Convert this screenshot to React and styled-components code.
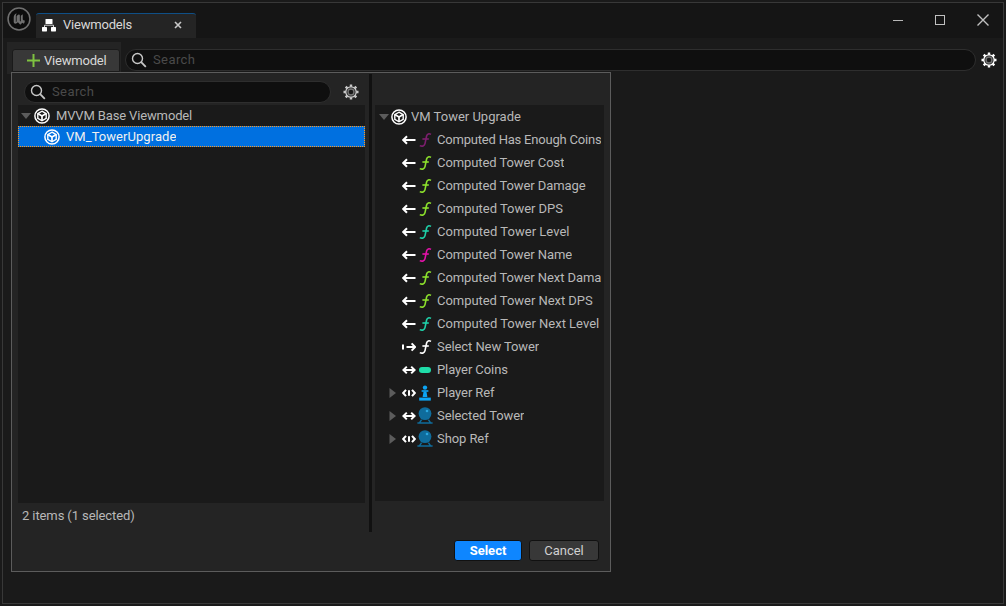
import React from 'react';
import styled, { createGlobalStyle } from 'styled-components';

const GlobalStyle = createGlobalStyle`
  html, body {
    margin: 0;
    padding: 0;
    background: #1a1a1a;
    font-family: Roboto, "Liberation Sans", sans-serif;
    font-size: 13px;
    color: #b8b8b8;
  }
`;

const Page = styled.div`
  width: 1006px;
  height: 606px;
  box-sizing: border-box;
  padding: 2px;
  overflow: hidden;
`;

const Win = styled.div`
  position: relative;
  height: 100%;
  box-sizing: border-box;
  border: 1px solid #383838;
  background: #1a1a1a;
  display: flex;
  flex-direction: column;
`;

const TitleBar = styled.div`
  height: 35px;
  flex: none;
  background: #151515;
  display: flex;
  align-items: flex-end;
  padding-left: 4px;
`;

const Logo = styled.svg`
  width: 24px;
  height: 24px;
  align-self: flex-start;
  margin-top: 4px;
  margin-right: 5px;
`;

const Tab = styled.div`
  width: 160px;
  height: 25px;
  box-sizing: border-box;
  border-top: 1px solid #0f4f86;
  border-radius: 3px 3px 0 0;
  background: #242424;
  color: #d8d8d8;
  display: flex;
  align-items: center;
  padding: 0 9px 3px 6px;
  gap: 7px;
`;

const TabTitle = styled.span`
  flex: 1;
  letter-spacing: -0.2px;
`;

const TabClose = styled.svg`
  width: 8px;
  height: 8px;
  margin-right: 5px;
`;

const WinButtons = styled.div`
  margin-left: auto;
  height: 100%;
  display: flex;
  align-items: center;
  gap: 27px;
  padding: 0 12px 1px 0;
`;

const WinIcon = styled.svg`
  width: 16px;
  height: 16px;
  display: block;
`;

const Toolbar = styled.div`
  height: 32px;
  flex: none;
  margin-top: 4px;
  display: flex;
  align-items: flex-start;
  padding-left: 4px;
`;

const AddWrap = styled.div`
  background: #242424;
  height: 32px;
  box-sizing: border-box;
  padding: 7px 0 0 5px;
  width: 114px;
`;

const AddButton = styled.div`
  width: 108px;
  height: 23px;
  box-sizing: border-box;
  background: #383838;
  border-radius: 3px 3px 0 0;
  border: 1px solid #1a1a1a;
  display: flex;
  align-items: center;
  padding-left: 13px;
  gap: 3px;
  color: #d8d8d8;
  letter-spacing: -0.2px;
`;

const SearchBox = styled.div`
  height: 22px;
  box-sizing: border-box;
  border: 1px solid #2e2e2e;
  border-radius: 12px;
  background: #0f0f0f;
  color: #4a4a4a;
  display: flex;
  align-items: center;
  padding: 0 0 1px 5px;
  gap: 6px;
  letter-spacing: 0.4px;
  width: ${(p) => p.$width}px;
  flex: none;
`;

const MainSearch = styled(SearchBox)`
  margin: 7px 0 0 4px;
`;

const GearSlot = styled.div`
  margin: 10px 0 0 5px;
  line-height: 0;
`;

const Dialog = styled.div`
  position: absolute;
  left: 8px;
  top: 69px;
  width: 600px;
  height: 500px;
  box-sizing: border-box;
  border: 1px solid #5c5c5c;
  background: #242424;
  display: flex;
  flex-direction: column;
`;

const Panes = styled.div`
  flex: 1;
  display: flex;
  min-height: 0;
`;

const LeftPane = styled.div`
  width: 357px;
  flex: none;
  display: flex;
  flex-direction: column;
  padding-top: 8px;
  box-sizing: border-box;
`;

const Splitter = styled.div`
  width: 3px;
  flex: none;
  background: #111;
  margin-top: 1px;
`;

const RightPane = styled.div`
  flex: 1;
  min-width: 0;
  padding: 32px 6px 0 3px;
  display: flex;
  flex-direction: column;
`;

const SearchRow = styled.div`
  display: flex;
  align-items: center;
  padding-left: 12px;
  height: 22px;
  gap: 12px;
  flex: none;
`;

const TreeBox = styled.div`
  background: #1a1a1a;
  margin: 2px 4px 0 6px;
  height: 398px;
  flex: none;
`;

const Footer = styled.div`
  padding: 5px 0 0 10px;
  line-height: 16px;
  letter-spacing: -0.1px;
`;

const Row = styled.div`
  height: 21px;
  box-sizing: border-box;
  display: flex;
  align-items: center;
  padding-left: ${(p) => p.$indent}px;
  color: ${(p) => (p.$selected ? '#f0f0f0' : '#b8b8b8')};
  background: ${(p) => (p.$selected ? '#0070e0' : 'transparent')};
  outline: ${(p) => (p.$selected ? '1px dotted #ff9a1e' : 'none')};
  outline-offset: -1px;
`;

const RightTree = styled.div`
  background: #1a1a1a;
  height: 396px;
  overflow: hidden;
`;

const PropRow = styled.div`
  height: 23px;
  box-sizing: border-box;
  display: flex;
  align-items: center;
  padding: 0 3px 0 ${(p) => p.$indent}px;
  white-space: nowrap;
`;

const Expander = styled.svg`
  width: 10px;
  height: 10px;
  flex: none;
`;

const ExpanderSlot = styled.div`
  width: 14px;
  flex: none;
  display: flex;
  align-items: center;
`;

const Name = styled.span`
  margin-left: ${(p) => p.$gap}px;
  min-width: 0;
  overflow: hidden;
  letter-spacing: ${(p) => p.$spacing ?? -0.08}px;
`;

const ActionBar = styled.div`
  height: 39px;
  box-sizing: border-box;
  flex: none;
  display: flex;
  justify-content: flex-end;
  gap: 7px;
  padding: 8px 11px 0 0;
  align-items: flex-start;
`;

const Btn = styled.div`
  width: ${(p) => p.$width}px;
  height: 21px;
  box-sizing: border-box;
  border: 1px solid #111;
  border-radius: 3px;
  display: flex;
  align-items: center;
  justify-content: center;
  background: ${(p) => (p.$primary ? '#0e86ff' : '#383838')};
  color: ${(p) => (p.$primary ? '#fff' : '#d0d0d0')};
  font-weight: ${(p) => (p.$primary ? 700 : 400)};
`;

const Search = () => (
  <svg width="16" height="16" viewBox="0 0 16 16" fill="none" stroke="#c8c8c8" strokeWidth="1.4">
    <circle cx="6.5" cy="6.5" r="5" />
    <path d="M10.2 10.2l4.6 4.6" strokeWidth="1.8" />
  </svg>
);

const Gear = ({ size = 16, light }) => (
  <svg width={size} height={size} viewBox="0 0 16 16">
    <g stroke={light ? '#ffffff' : '#c8c8c8'} strokeWidth="2.4">
      <path d="M8 0.5v15M0.5 8h15M2.7 2.7l10.6 10.6M13.3 2.7L2.7 13.3" />
    </g>
    <circle cx="8" cy="8" r="5.2" fill="#1a1a1a" stroke={light ? '#ffffff' : '#c8c8c8'} strokeWidth="1.3" />
    <circle cx="8" cy="8" r="3" fill="none" stroke="#777" strokeWidth="1.4" />
  </svg>
);

const Cube = () => (
  <svg width="16" height="16" viewBox="0 0 16 16" fill="none" stroke="#fff" style={{ flex: 'none' }}>
    <circle cx="8" cy="8" r="7.1" strokeWidth="1.5" />
    <path d="M8 3.2l4.2 2.4v4.8L8 12.8l-4.2-2.4V5.6z" strokeWidth="1.4" />
    <path d="M3.8 5.6L8 8l4.2-2.4M8 8v4.8" strokeWidth="1.7" />
  </svg>
);

const Caret = ({ open }) => (
  <Expander viewBox="0 0 10 10">
    {open ? <path d="M0 2h10L5 8z" fill="#5c5c5c" /> : <path d="M1.5 0v10L8 5z" fill="#5c5c5c" />}
  </Expander>
);

const arrows = {
  left: <path d="M1 7h12.5M5 3.2L1.2 7 5 10.8" />,
  out: <path d="M1 4.6v4.8M4.5 7h8.5M9.6 3.4L13.2 7l-3.6 3.6" />,
  both: <path d="M1.5 7h11M4.8 3.6L1.4 7l3.4 3.4M9.2 3.6L12.6 7l-3.4 3.4" />,
  priv: <path d="M4 3.8L1.2 7 4 10.2M10 3.8L12.8 7 10 10.2M7 4.2v5.6" />,
};

const Access = ({ kind }) => (
  <svg width="14" height="14" viewBox="0 0 14 14" fill="none" stroke="#fff" strokeWidth="2" style={{ flex: 'none' }}>
    {arrows[kind]}
  </svg>
);

const Func = ({ color }) => (
  <svg width="14" height="16" viewBox="0 0 14 16" fill="none" stroke={color} strokeWidth="1.6" style={{ flex: 'none' }}>
    <path d="M13 2.4C11 1.2 9.2 1.8 8.6 4L7 11.6C6.5 14 4.2 14.8 1.8 13.6" />
    <path d="M4.4 7h6.4" />
  </svg>
);

const Pill = () => (
  <svg width="14" height="16" viewBox="0 0 14 16" style={{ flex: 'none' }}>
    <rect x="1" y="5" width="12" height="6" rx="3" fill="#1fdca8" />
  </svg>
);

const Pawn = () => (
  <svg width="14" height="16" viewBox="0 0 14 16" fill="#0ca4f4" style={{ flex: 'none' }}>
    <circle cx="7" cy="2.6" r="2.2" />
    <rect x="3.6" y="5.2" width="6.8" height="1.6" />
    <path d="M5.6 6.6h2.8l1 5.4H4.6z" />
    <rect x="1.2" y="12.6" width="11.6" height="3" />
  </svg>
);

const Actor = () => (
  <svg width="16" height="17" viewBox="0 0 16 17" style={{ margin: '0 -1px', flex: 'none' }}>
    <circle cx="8" cy="6.6" r="6.4" fill="#0f6c9c" />
    <circle cx="10" cy="4" r="1.3" fill="#2aa7e0" />
    <path d="M0.4 16h15.2M2.6 15.6l2-3M13.4 15.6l-2-3" stroke="#0f6c9c" strokeWidth="1.5" fill="none" />
  </svg>
);

const props = [
  { name: 'Computed Has Enough Coins', access: 'left', color: '#7d1f6e', spacing: -0.2 },
  { name: 'Computed Tower Cost', access: 'left', color: '#8ce02c' },
  { name: 'Computed Tower Damage', access: 'left', color: '#8ce02c' },
  { name: 'Computed Tower DPS', access: 'left', color: '#8ce02c', spacing: -0.03 },
  { name: 'Computed Tower Level', access: 'left', color: '#1fd0a8', spacing: 0.02 },
  { name: 'Computed Tower Name', access: 'left', color: '#e312a8' },
  { name: 'Computed Tower Next Damage', access: 'left', color: '#8ce02c' },
  { name: 'Computed Tower Next DPS', access: 'left', color: '#8ce02c', spacing: -0.04 },
  { name: 'Computed Tower Next Level', access: 'left', color: '#1fd0a8', spacing: 0 },
  { name: 'Select New Tower', access: 'out', color: '#ffffff' },
  { name: 'Player Coins', access: 'both', type: <Pill /> },
  { name: 'Player Ref', access: 'priv', type: <Pawn />, more: true },
  { name: 'Selected Tower', access: 'both', type: <Actor />, more: true },
  { name: 'Shop Ref', access: 'priv', type: <Actor />, more: true },
];

export default function App() {
  return (
    <Page>
      <GlobalStyle />
      <Win>
        <TitleBar>
          <Logo viewBox="0 0 25 25" fill="none">
            <circle cx="12.5" cy="12.5" r="11.4" fill="#0c0c0c" stroke="#707070" strokeWidth="1.6" />
            <path
              d="M10 6.5C7.8 7.6 7 9 7 11v4.4c0 1.8 1.6 2.6 3 1.6l1.4-1 2.4 2.4 2.2-2 1.6 1c.6-1 1-2 1-3.4h-1l-1.2-1V7.6l-2 1.6v6l-1-.7V8.8c0-1-1-1.2-1.8-.6L10 9.4v5.8l-.8.4V9z"
              fill="#707070"
            />
          </Logo>
          <Tab>
            <svg width="14" height="14" viewBox="0 0 14 14" fill="#fff">
              <rect x="3.5" y="1" width="7" height="5" rx="0.6" />
              <rect x="0" y="9" width="5" height="4.4" rx="0.6" />
              <rect x="9" y="9" width="5" height="4.4" rx="0.6" />
              <path d="M2.5 9V7.2h9V9" fill="none" stroke="#fff" strokeWidth="0.8" />
            </svg>
            <TabTitle>Viewmodels</TabTitle>
            <TabClose viewBox="0 0 8 8" stroke="#c8c8c8" strokeWidth="1.6">
              <path d="M1 1l6 6M7 1L1 7" />
            </TabClose>
          </Tab>
          <WinButtons>
            <WinIcon viewBox="0 0 16 16" stroke="#b8b8b8" fill="none">
              <path d="M4 8.5h10" />
            </WinIcon>
            <WinIcon viewBox="0 0 16 16" stroke="#c0c0c0" fill="none">
              <rect x="3.5" y="3.5" width="9" height="9" />
            </WinIcon>
            <WinIcon viewBox="0 0 16 16" stroke="#c0c0c0" strokeWidth="1.4" fill="none">
              <path d="M2.5 2.5l11 11M13.5 2.5l-11 11" />
            </WinIcon>
          </WinButtons>
        </TitleBar>

        <Toolbar>
          <AddWrap>
            <AddButton>
              <svg width="15" height="15" viewBox="0 0 15 15" stroke="#7fc241" strokeWidth="2">
                <path d="M7.5 1v13M1 7.5h13" />
              </svg>
              Viewmodel
            </AddButton>
          </AddWrap>
          <MainSearch $width={851}>
            <Search />
            Search
          </MainSearch>
          <GearSlot>
            <Gear light />
          </GearSlot>
        </Toolbar>

        <Dialog>
          <Panes>
            <LeftPane>
              <SearchRow>
                <SearchBox $width={307}>
                  <Search />
                  Search
                </SearchBox>
                <Gear />
              </SearchRow>
              <TreeBox>
                <Row $indent={3}>
                  <Caret open />
                  <Name $gap={3} />
                  <Cube />
                  <Name $gap={6} $spacing={-0.14}>MVVM Base Viewmodel</Name>
                </Row>
                <Row $indent={26} $selected>
                  <Cube />
                  <Name $gap={6} $spacing={0.05}>VM_TowerUpgrade</Name>
                </Row>
              </TreeBox>
              <Footer>2 items (1 selected)</Footer>
            </LeftPane>
            <Splitter />
            <RightPane>
              <RightTree>
                <PropRow $indent={4}>
                  <Caret open />
                  <Name $gap={2} />
                  <Cube />
                  <Name $gap={4} $spacing={0}>VM Tower Upgrade</Name>
                </PropRow>
                {props.map((p) => (
                  <PropRow key={p.name} $indent={13}>
                    <ExpanderSlot>{p.more && <Caret />}</ExpanderSlot>
                    <Access kind={p.access} />
                    <Name $gap={2} />
                    {p.type || <Func color={p.color} />}
                    <Name $gap={5} $spacing={p.spacing}>{p.name}</Name>
                  </PropRow>
                ))}
              </RightTree>
            </RightPane>
          </Panes>
          <ActionBar>
            <Btn $primary $width={68}>Select</Btn>
            <Btn $width={70}>Cancel</Btn>
          </ActionBar>
        </Dialog>
      </Win>
    </Page>
  );
}
